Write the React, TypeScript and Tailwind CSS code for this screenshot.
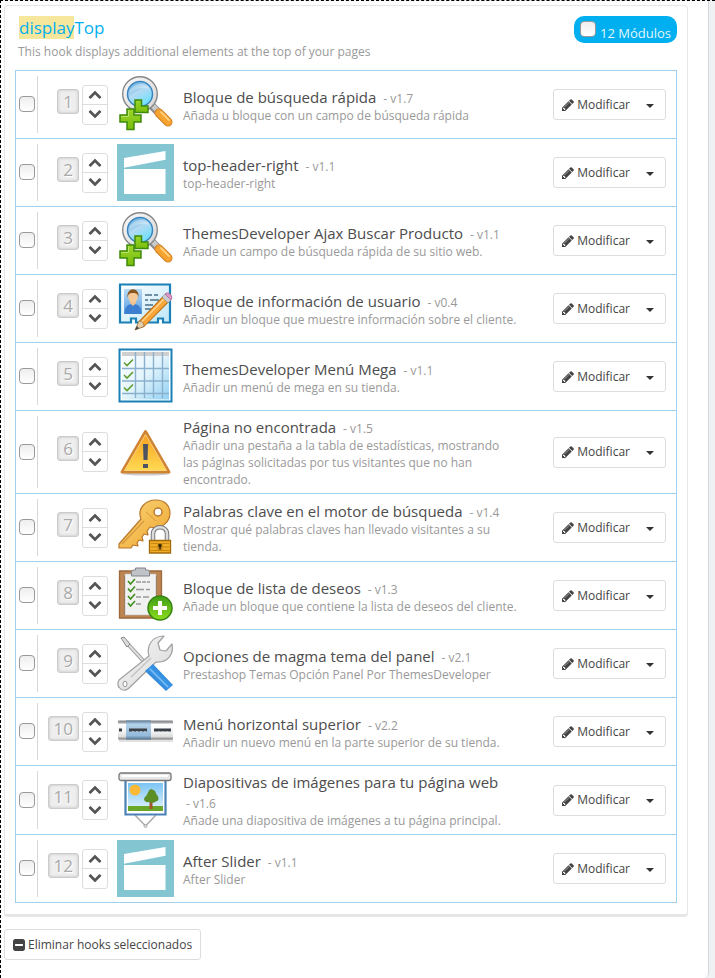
import { ReactNode, useState } from 'react';

interface Module {
  id: number;
  name: string;
  version: string;
  description: string;
  icon: ReactNode;
}

function SearchIcon() {
  return (
    <svg viewBox="0 0 57 57" className="w-full h-full">
      <defs>
        <linearGradient id="lens" x1="0" y1="0" x2="0.6" y2="1">
          <stop offset="0" stopColor="#4fa3dd" />
          <stop offset="0.5" stopColor="#b4daf3" />
          <stop offset="1" stopColor="#6fe0fd" />
        </linearGradient>
        <linearGradient id="ring" x1="0" y1="0" x2="1" y2="1">
          <stop offset="0" stopColor="#fafafa" />
          <stop offset="1" stopColor="#d4d4d4" />
        </linearGradient>
        <linearGradient id="plus" x1="0" y1="0" x2="0" y2="1">
          <stop offset="0" stopColor="#9bd62a" />
          <stop offset="1" stopColor="#78bd0c" />
        </linearGradient>
      </defs>
      <path d="M33 28l8 8" stroke="#8c8c8c" strokeWidth="8" />
      <path d="M34 28l7 7" stroke="#c9c9c9" strokeWidth="5" />
      <path d="M42 37l9 9" stroke="#cf7d22" strokeWidth="9" strokeLinecap="round" />
      <path d="M42 37l9 9" stroke="#f7a32f" strokeWidth="7" strokeLinecap="round" />
      <path d="M44 36l8 8" stroke="#ffd07a" strokeWidth="2" strokeLinecap="round" />
      <circle cx="23" cy="18" r="17.3" fill="url(#ring)" stroke="#878787" strokeWidth="1.4" />
      <circle cx="23" cy="18" r="12.5" fill="url(#lens)" stroke="#3a85bd" strokeWidth="1.5" />
      <path d="M12.5 17c1-9 15-13 20-4-6-2-14-1-20 4z" fill="#fff" opacity="0.3" />
      <path d="M18 24h6.500v6H31v6.500H18z" fill="url(#plus)" stroke="#3f8a0c" strokeWidth="1.5" />
      <path d="M10 33h7v6h7v7h-7v7.500h-7V46H3v-7h7z" fill="url(#plus)" stroke="#3f8a0c" strokeWidth="1.5" />
      <path d="M11.500 34.500v6h-7" fill="none" stroke="#b9e56c" strokeWidth="1" />
    </svg>
  );
}

function ClapperIcon() {
  return (
    <svg viewBox="0 0 57 57" className="w-full h-full">
      <path d="M0 0h57v57H0z" fill="#83c6d2" />
      <path d="M7 14l41.500-7v8.700L7 23.700z" fill="#fff" />
      <path d="M7 25h41.500v25H7z" fill="#fff" />
    </svg>
  );
}

function UserCardIcon() {
  return (
    <svg viewBox="0 0 57 57" className="w-full h-full">
      <defs>
        <linearGradient id="card" x1="0" y1="0" x2="1" y2="1">
          <stop offset="0" stopColor="#fff" />
          <stop offset="1" stopColor="#bfe6f8" />
        </linearGradient>
        <linearGradient id="photo" x1="0" y1="0" x2="0" y2="1">
          <stop offset="0" stopColor="#b9dcf7" />
          <stop offset="1" stopColor="#5b9ee0" />
        </linearGradient>
      </defs>
      <path
        d="M3 4.500h50v38h-7v-4h-5v4H19v-4h-5v4H3z"
        fill="url(#card)"
        stroke="#1b80b5"
        strokeWidth="2.2"
      />
      <path d="M7 9h18v25H7z" fill="url(#photo)" />
      <path d="M7.500 34c0-7 3-10 8.500-10s8.500 3 8.500 10z" fill="#3c7fd0" />
      <path d="M13 23l3 3 3-3v-3h-6z" fill="#f3c08d" />
      <ellipse cx="16" cy="16.500" rx="4.800" ry="6" fill="#f6c998" />
      <path d="M10.500 18c-1.500-11 12.500-12 11 0-.5-4-2-5-5.500-5s-5 1-5.500 5z" fill="#8a541f" />
      <path d="M28 15h7m2 0h4M28 20h3m2 0h9M28 25h8M28 29h6" stroke="#4a6f88" strokeWidth="1.3" />
      <g transform="translate(1 3)">
        <path d="M17 47l4-9L45 13l6 6-25 25z" fill="#b8690f" />
        <path d="M21.500 39L45 14.500l4.500 4.500L26 43z" fill="#f8a63a" />
        <path d="M22.500 40L46 16" stroke="#ffd38a" strokeWidth="1.5" />
        <path d="M17 47l4-9c3 0 5 2 5 5.500z" fill="#e8cfa8" stroke="#8a6a45" strokeWidth="0.7" />
        <path d="M17 47l2-4 2 2.300z" fill="#444" />
        <path d="M44 14l3-3 6 6-3 3z" fill="#c8ccd0" stroke="#888" strokeWidth="0.6" />
        <path d="M47 11c3-3 9 2 6 6z" fill="#dc9ac6" stroke="#b571a2" strokeWidth="1" />
      </g>
    </svg>
  );
}

function TableIcon() {
  return (
    <svg viewBox="0 0 57 57" className="w-full h-full">
      <defs>
        <linearGradient id="sheet" x1="0" y1="0" x2="1" y2="1">
          <stop offset="0" stopColor="#fff" />
          <stop offset="0.5" stopColor="#e2f4fc" />
          <stop offset="1" stopColor="#8fd0f2" />
        </linearGradient>
      </defs>
      <path d="M2.500 1.500h52v52h-52z" fill="#fff" stroke="#1b80b5" strokeWidth="2" />
      <path d="M5 3.500h47v48H5z" fill="url(#sheet)" />
      <path d="M5 4h47v4H5z" fill="#cfcfcf" />
      <path d="M18.500 4v46M27.500 4v46M36.500 4v46M45.500 4v46M5 20.500h47M5 33h47M5 45.500h47" stroke="#8bb0cd" strokeWidth="1.4" />
      <path
        d="M7 14.500l3 3 6-6M7 27l3 3 6-6M7 39.500l3 3 6-6"
        fill="none"
        stroke="#5e9e2f"
        strokeWidth="1.6"
      />
    </svg>
  );
}

function WarningIcon() {
  return (
    <svg viewBox="0 0 57 57" className="w-full h-full">
      <defs>
        <linearGradient id="warn" x1="0" y1="0" x2="0" y2="1">
          <stop offset="0" stopColor="#f99c1c" />
          <stop offset="1" stopColor="#ffdc55" />
        </linearGradient>
      </defs>
      <ellipse cx="29" cy="50" rx="24" ry="1.500" fill="#ccc" />
      <path
        d="M28.500 7.500L52 48h-47z"
        fill="url(#warn)"
        stroke="#cf8433"
        strokeWidth="3"
        strokeLinejoin="round"
      />
      <path d="M28.500 10.500L49.500 46.500h-42z" fill="none" stroke="#ffd27a" strokeWidth="1" />
      <path d="M26 20h5l-.5 16h-4z" fill="#4d5461" />
      <path d="M26 40h5v4h-5z" fill="#4d5461" />
    </svg>
  );
}

function KeyIcon() {
  return (
    <svg viewBox="0 0 57 57" className="w-full h-full">
      <defs>
        <linearGradient id="gold" x1="0" y1="0" x2="1" y2="1">
          <stop offset="0" stopColor="#fbd67c" />
          <stop offset="1" stopColor="#eda52c" />
        </linearGradient>
      </defs>
      <path
        d="M24 20C20 10 28 1 39 1c8 0 14 5 14 13 0 10-10 17-20 14l-3 4 1 4-4-1-2 3 1 4-4-1-2 3 1 3-5-1-2 3H2v-4z"
        fill="url(#gold)"
        stroke="#b9772a"
        strokeWidth="1.2"
        strokeLinejoin="round"
      />
      <path d="M5 45l22-23" stroke="#d69a40" strokeWidth="1.5" />
      <path d="M29 13l10 9" stroke="#d99b3c" strokeWidth="1" />
      <circle cx="41" cy="13" r="4" fill="#fff" stroke="#b9772a" strokeWidth="1.5" />
      <path d="M36 42v-7c0-9 14-9 14 0v7" fill="none" stroke="#777" strokeWidth="4.5" />
      <path d="M36 42v-7c0-9 14-9 14 0v7" fill="none" stroke="#ddd" strokeWidth="2.5" />
      <path d="M32.500 41.500h21v12.500h-21z" fill="#f0ad25" stroke="#a36a0c" strokeWidth="1.3" />
      <path d="M34 44.500h18M34 48h18M34 51.500h18" stroke="#c98613" />
      <path d="M40.500 44h5v7h-5z" fill="#c58a1a" />
      <circle cx="43" cy="46.500" r="1.800" fill="#3e2c08" />
      <path d="M42.300 46h1.500v4.500h-1.500z" fill="#3e2c08" />
    </svg>
  );
}

function ClipboardIcon() {
  return (
    <svg viewBox="0 0 57 57" className="w-full h-full">
      <defs>
        <linearGradient id="add" x1="0" y1="0" x2="0" y2="1">
          <stop offset="0" stopColor="#3f9e17" />
          <stop offset="1" stopColor="#8bdc1e" />
        </linearGradient>
      </defs>
      <path d="M2.500 4h42v47h-42z" fill="#bd8551" stroke="#9c6a3c" strokeWidth="1.3" />
      <path d="M7 9h33v39H7z" fill="#8d6138" />
      <path d="M8 7h31v37l-4 4H8z" fill="#f1f1f1" stroke="#bbb" strokeWidth="0.6" />
      <path
        d="M14.500 9V5c0-1 1-2 2-2h2V1h10v2h2c1 0 2 1 2 2v4z"
        fill="#c0c3c7"
        stroke="#80858b"
        strokeWidth="1"
      />
      <path d="M19 15h5m1 0h4m1 0h3M19 22.500h8m2 0h4M19 30h5m2 0h6M19 37h5" stroke="#999" strokeWidth="1.3" />
      <path
        d="M11 14l2.500 3 4.500-5M11 21.500l2.500 3 4.500-5M11 29l2.500 3 4.500-5M11 36l2.500 3 4.500-5"
        fill="none"
        stroke="#3f8f1d"
        strokeWidth="1.6"
      />
      <circle cx="43" cy="41" r="12" fill="url(#add)" stroke="#35850f" strokeWidth="1.5" />
      <path d="M43 34v14M36 41h14" stroke="#fff" strokeWidth="4" />
    </svg>
  );
}

function ToolsIcon() {
  return (
    <svg viewBox="0 0 57 57" className="w-full h-full">
      <defs>
        <linearGradient id="steel" x1="0" y1="0" x2="1" y2="1">
          <stop offset="0" stopColor="#f8f8f8" />
          <stop offset="1" stopColor="#d8d8d8" />
        </linearGradient>
        <linearGradient id="handle" x1="0" y1="1" x2="1" y2="0">
          <stop offset="0" stopColor="#0d57a8" />
          <stop offset="0.5" stopColor="#3d98e8" />
          <stop offset="1" stopColor="#1566b8" />
        </linearGradient>
      </defs>
      <path d="M9 7l22 24" stroke="#999" strokeWidth="4" />
      <path d="M9 7l22 24" stroke="#dedede" strokeWidth="2" />
      <path d="M4 3l3-1 6 7-3 3z" fill="#ddd" stroke="#888" strokeWidth="1" />
      <path
        d="M32 21c-3-10 3-20 15-20l-6 7 2 7 6 1 6-7c2 10-4 19-16 18L12 53c-5 5-14 0-10-8z"
        fill="url(#steel)"
        stroke="#a0a0a0"
        strokeWidth="1.2"
        strokeLinejoin="round"
      />
      <ellipse cx="8" cy="49" rx="2" ry="2.800" fill="#fff" stroke="#999" />
      <path d="M14 42l20-19" stroke="#c4c4c4" strokeWidth="1.5" />
      <path d="M28 36l8-7 20 21-7 6z" fill="url(#handle)" />
      <path d="M33 34l18 18" stroke="#7fc0f5" strokeWidth="1.5" />
    </svg>
  );
}

function MenuBarIcon() {
  return (
    <svg viewBox="0 0 57 57" className="w-full h-full">
      <defs>
        <linearGradient id="bar" x1="0" y1="0" x2="0" y2="1">
          <stop offset="0" stopColor="#808285" />
          <stop offset="0.12" stopColor="#a5a7aa" />
          <stop offset="0.2" stopColor="#fff" />
          <stop offset="0.6" stopColor="#f2f2f2" />
          <stop offset="0.85" stopColor="#ddd" />
          <stop offset="1" stopColor="#777" />
        </linearGradient>
        <linearGradient id="tab" x1="0" y1="0" x2="0" y2="1">
          <stop offset="0" stopColor="#5e7c98" />
          <stop offset="0.2" stopColor="#b4d2ea" />
          <stop offset="0.8" stopColor="#94bada" />
          <stop offset="1" stopColor="#54718b" />
        </linearGradient>
      </defs>
      <path d="M2 36h54v3H2z" fill="#e2e2e2" />
      <rect x="1" y="17.500" width="55" height="19" rx="1" fill="url(#bar)" />
      <path d="M9 17.500h25v19H9z" fill="url(#tab)" />
      <path d="M2 27h3M12 27h18M37 27h17" stroke="#3a4046" strokeWidth="3" />
      <path d="M15 28.500h14M41 28.500h12" stroke="#aebbc6" strokeWidth="1" strokeDasharray="2 2" />
    </svg>
  );
}

function SlideIcon() {
  return (
    <svg viewBox="0 0 57 57" className="w-full h-full">
      <defs>
        <linearGradient id="sky" x1="0" y1="0" x2="0" y2="1">
          <stop offset="0" stopColor="#7cc4f5" />
          <stop offset="1" stopColor="#e3f5fd" />
        </linearGradient>
      </defs>
      <path d="M18 43l10.500 11L39 43" fill="none" stroke="#aaa" strokeWidth="1.5" />
      <circle cx="28.500" cy="54" r="1.500" fill="#ddd" stroke="#999" strokeWidth="0.7" />
      <path d="M8.500 8h40v34.500h-40z" fill="#fff" stroke="#4a82b6" strokeWidth="2.2" />
      <path d="M11 11h35v28H11z" fill="url(#sky)" />
      <path d="M11 34h35v5H11z" fill="#6aa82b" />
      <circle cx="18" cy="18" r="5.500" fill="#fbb935" />
      <path d="M32.500 29h3v8h-3z" fill="#a3562a" />
      <path d="M34 17c-3 1-3 5-5 7-4 3-1 7 3 6 3 2 6 0 8-1 3-1 1-6-1-7 0-3-2-4-5-5z" fill="#5b8f26" />
      <rect x="2" y="1" width="52" height="7.500" rx="2" fill="#e8e8e8" stroke="#777" strokeWidth="1.3" />
      <path d="M5 4h46" stroke="#fff" strokeWidth="2" />
    </svg>
  );
}

function PencilIcon() {
  return (
    <svg viewBox="0 0 1792 1792" className="w-3.5 h-3.5" fill="currentColor">
      <path d="M491 1536l91-91-235-235-91 91v107h128v128h107zM1014 608q0-22-22-22-10 0-17 7l-542 542q-7 7-7 17 0 22 22 22 10 0 17-7l542-542q7-7 7-17zM960 416l416 416-832 832h-416v-416zM1643 512q0 53-37 90l-166 166-416-416 166-165q36-38 90-38 53 0 91 38l235 234q37 39 37 91z" />
    </svg>
  );
}

function ChevronUpIcon() {
  return (
    <svg viewBox="0 0 1792 1792" className="w-3.5 h-3.5" fill="currentColor">
      <path d="M1683 1331l-166 165q-19 19-45 19t-45-19l-531-531-531 531q-19 19-45 19t-45-19l-166-165q-19-19-19-45.500t19-45.500l742-741q19-19 45-19t45 19l742 741q19 19 19 45.500t-19 45.500z" />
    </svg>
  );
}

function ChevronDownIcon() {
  return (
    <svg viewBox="0 0 1792 1792" className="w-3.5 h-3.5" fill="currentColor">
      <path d="M1683 808l-742 741q-19 19-45 19t-45-19l-742-741q-19-19-19-45.500t19-45.500l166-165q19-19 45-19t45 19l531 531 531-531q19-19 45-19t45 19l166 165q19 19 19 45.500t-19 45.500z" />
    </svg>
  );
}

function MinusSquareIcon() {
  return (
    <svg viewBox="0 0 1536 1792" className="w-3 h-3.5" fill="currentColor">
      <path d="M1280 960v-128q0-26-19-45t-45-19h-896q-26 0-45 19t-19 45v128q0 26 19 45t45 19h896q26 0 45-19t19-45zm256-544v960q0 119-84.500 203.500t-203.500 84.500h-960q-119 0-203.500-84.500t-84.500-203.500v-960q0-119 84.500-203.500t203.500-84.500h960q119 0 203.500 84.500t84.500 203.500z" />
    </svg>
  );
}

const modules: Module[] = [
  { id: 1, name: 'Bloque de búsqueda rápida', version: '1.7', description: 'Añada u bloque con un campo de búsqueda rápida', icon: <SearchIcon /> },
  { id: 2, name: 'top-header-right', version: '1.1', description: 'top-header-right', icon: <ClapperIcon /> },
  { id: 3, name: 'ThemesDeveloper Ajax Buscar Producto', version: '1.1', description: 'Añade un campo de búsqueda rápida de su sitio web.', icon: <SearchIcon /> },
  { id: 4, name: 'Bloque de información de usuario', version: '0.4', description: 'Añadir un bloque que muestre información sobre el cliente.', icon: <UserCardIcon /> },
  { id: 5, name: 'ThemesDeveloper Menú Mega', version: '1.1', description: 'Añadir un menú de mega en su tienda.', icon: <TableIcon /> },
  { id: 6, name: 'Página no encontrada', version: '1.5', description: 'Añadir una pestaña a la tabla de estadísticas, mostrando las páginas solicitadas por tus visitantes que no han encontrado.', icon: <WarningIcon /> },
  { id: 7, name: 'Palabras clave en el motor de búsqueda', version: '1.4', description: 'Mostrar qué palabras claves han llevado visitantes a su tienda.', icon: <KeyIcon /> },
  { id: 8, name: 'Bloque de lista de deseos', version: '1.3', description: 'Añade un bloque que contiene la lista de deseos del cliente.', icon: <ClipboardIcon /> },
  { id: 9, name: 'Opciones de magma tema del panel', version: '2.1', description: 'Prestashop Temas Opción Panel Por ThemesDeveloper', icon: <ToolsIcon /> },
  { id: 10, name: 'Menú horizontal superior', version: '2.2', description: 'Añadir un nuevo menú en la parte superior de su tienda.', icon: <MenuBarIcon /> },
  { id: 11, name: 'Diapositivas de imágenes para tu página web', version: '1.6', description: 'Añade una diapositiva de imágenes a tu página principal.', icon: <SlideIcon /> },
  { id: 12, name: 'After Slider', version: '1.1', description: 'After Slider', icon: <ClapperIcon /> },
];

const checkboxClass =
  'appearance-none block shrink-0 w-4 h-4 rounded border border-[#999] bg-linear-to-b from-[#eee] to-white checked:bg-[#00aff0] checked:bg-none';

interface ModuleRowProps {
  module: Module;
  checked: boolean;
  onToggle: () => void;
}

function ModuleRow({ module, checked, onToggle }: ModuleRowProps) {
  return (
    <li className="flex items-center p-[5px] pl-[3px] border-t border-[#a0d0eb] first:border-t-0">
      <div className="flex items-center self-stretch w-[19px] shrink-0 pb-px border-r border-[#d8d8d8]">
        <input
          type="checkbox"
          aria-label={module.name}
          checked={checked}
          onChange={onToggle}
          className={checkboxClass}
        />
      </div>
      <div className="flex items-center justify-end w-[70px] shrink-0 gap-[3px]">
        <span className="h-[25px] px-[5px] mb-[7px] text-[17px] leading-[23px] text-[#aaa] bg-[#eee] border border-[#ccc] rounded-[3px] shadow-[inset_0_0_3px_#bbb] [text-shadow:1px_1px_0_#fff]">
          {module.id}
        </span>
        <div className="flex flex-col w-[26px] border border-[#ddd] rounded-[3px] text-[#555]">
          <button type="button" aria-label="Subir" className="flex items-center justify-center h-[19px] pb-[2px] border-b border-[#ddd]">
            <ChevronUpIcon />
          </button>
          <button type="button" aria-label="Bajar" className="flex items-center justify-center h-[19px] pb-[2px]">
            <ChevronDownIcon />
          </button>
        </div>
      </div>
      <div className="w-[57px] h-[57px] shrink-0 ml-[9px]">{module.icon}</div>
      <div className="flex-1 min-w-0 pt-px ml-[9px] mr-[36px]">
        <h4 className="text-[15px] leading-[20px] text-[#4d4d4d]">
          {module.name}{' '}
          <span className="ml-[3px] text-[12px] leading-none text-[#999] whitespace-nowrap">- v{module.version}</span>
        </h4>
        <p className="text-[12px] leading-[17px] text-[#999]">{module.description}</p>
      </div>
      <div className="flex shrink-0 h-[31px] mr-[5px] text-[12px] text-[#444] bg-white border border-[#ddd] rounded-[3px]">
        <button type="button" className="flex items-center gap-[2px] pl-[7px] pr-[5px]">
          <PencilIcon />
          Modificar
        </button>
        <button type="button" aria-label="Más opciones" className="flex items-center justify-center w-[30px]">
          <span className="mt-[2px] border-x-4 border-t-4 border-x-transparent border-t-[#333]" />
        </button>
      </div>
    </li>
  );
}

export default function App() {
  const [selected, setSelected] = useState<number[]>([]);
  const allSelected = selected.length === modules.length;

  const toggle = (id: number) => {
    setSelected(selected.includes(id) ? selected.filter((s) => s !== id) : [...selected, id]);
  };

  return (
    <div className="min-h-screen pr-[6px] bg-[#eff1f2] border-t border-l border-dashed border-black font-['Open_Sans','Liberation_Sans',sans-serif] text-[12px] text-[#444]">
      <main className="min-h-[977px] pt-1 pl-[3px] pr-5 bg-white border-r border-[#d3d8db] rounded-br-[5px]">
        <section className="px-[10px] pb-[11px] border border-b-[3px] border-[#e6e6e6] rounded">
          <header className="flex items-start justify-between pt-[10px]">
            <div className="pl-[3px]">
              <h3 className="pl-px text-[17px] leading-[23px] text-[#00aff0]">
                <mark className="bg-[#f7e79c] text-[#00aff0]">display</mark>Top
              </h3>
              <p className="mt-1 leading-[17px] text-[#999]">
                This hook displays additional elements at the top of your pages
              </p>
            </div>
            <label className="flex h-[27px] px-[6px] gap-1 rounded-[10px] bg-[#00aff0] text-[13px] leading-[18px] text-[#e4f6fe]">
              <input
                type="checkbox"
                checked={allSelected}
                onChange={() => setSelected(allSelected ? [] : modules.map((m) => m.id))}
                className={`${checkboxClass} mt-[5px]`}
              />
              <span className="mt-2">{modules.length} Módulos</span>
            </label>
          </header>
          <ul className="mt-[10px] border border-[#a0d0eb]">
            {modules.map((module) => (
              <ModuleRow
                key={module.id}
                module={module}
                checked={selected.includes(module.id)}
                onToggle={() => toggle(module.id)}
              />
            ))}
          </ul>
        </section>
        <button
          type="button"
          className="flex items-center gap-[3px] h-[31px] mt-3 px-2 bg-white border border-[#ddd] rounded-[3px]"
        >
          <MinusSquareIcon />
          Eliminar hooks seleccionados
        </button>
      </main>
    </div>
  );
}
